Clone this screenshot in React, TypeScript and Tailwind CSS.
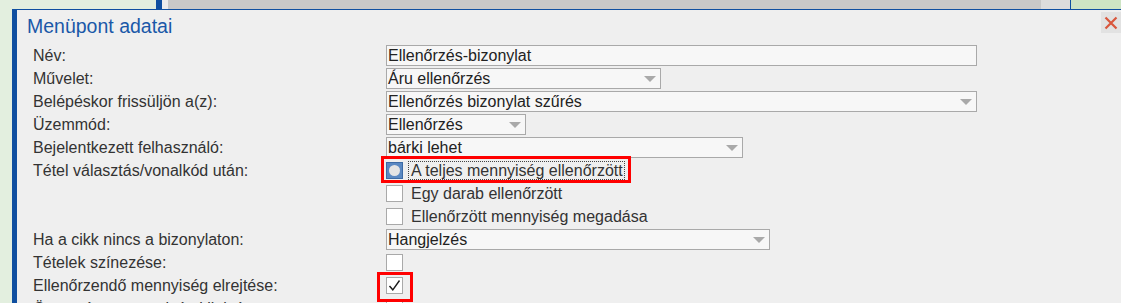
import React from "react";

const Arrow = () => (
  <span className="ml-auto mr-[4px] h-0 w-0 border-l-[6px] border-r-[6px] border-t-[6px] border-l-transparent border-r-transparent border-t-[#a9a9a9]" />
);

const Select = ({ w, text }: { w: string; text: string }) => (
  <div className={`${w} flex h-[21px] items-center border border-[#a9a9a9] bg-[#f7f7f7] pl-[1px] text-[16px] leading-none text-[#222]`}>
    <span>{text}</span>
    <Arrow />
  </div>
);

const Box = ({ checked }: { checked?: boolean }) => (
  <div className="flex h-[17px] w-[17px] items-center justify-center border border-[#a9a9a9] bg-white">
    {checked && (
      <svg width="13" height="13" viewBox="0 0 13 13">
        <path d="M1.5 7 L4.8 10.8 L11.5 1.5" fill="none" stroke="#1a1a1a" strokeWidth="1.4" />
      </svg>
    )}
  </div>
);

const Label = ({ children }: { children: React.ReactNode }) => (
  <div className="flex h-[21px] items-center text-[16px] leading-none text-[#333]">{children}</div>
);

export default function App() {
  return (
    <div
      className="relative h-[303px] w-[1121px] overflow-hidden bg-[#e3efdf]"
      style={{ fontFamily: '"Liberation Sans", Arial, sans-serif' }}
    >
      {/* top strip */}
      <div className="flex h-[9px]">
        <div className="w-[156px] bg-[#e3efdf]" />
        <div className="w-[6px] bg-[#0f4fa0]" />
        <div className="w-[6px] bg-[#ececec]" />
        <div className="w-[873px] bg-[#c8c8c8]" />
        <div className="w-[29px] bg-[#dcdcdc]" />
        <div className="w-[1px] bg-[#0f4fa0]" />
        <div className="flex-1 bg-[#cde4c4]" />
      </div>
      <div className="flex h-[294px]">
        <div className="w-[12px] shrink-0" />
        <div className="flex flex-1 flex-col overflow-hidden border-l-[5px] border-t border-[#0f4fa0] bg-[#efefef]">
          <div className="flex h-[35px] shrink-0 items-start justify-between">
            <div className="pl-[10px] pt-[4px] text-[19.5px] leading-[24px] text-[#1a58a8]">Menüpont adatai</div>
            <div className="mt-[2px] flex h-[21px] w-[20px] items-center justify-center bg-[#e2e2e2]">
              <svg width="14" height="14" viewBox="0 0 14 14">
                <path d="M1.5 1.5 L12.5 12.5 M12.5 1.5 L1.5 12.5" stroke="#d9573d" strokeWidth="2.2" />
              </svg>
            </div>
          </div>
          <div className="grid shrink-0 grid-cols-[353px_1fr] gap-y-[2px] pl-[16px]">
            <Label>Név:</Label>
            <div className="flex h-[21px] w-[591px] items-center border border-[#a9a9a9] bg-[#f7f7f7] pl-[1px] text-[16px] leading-none text-[#222]">
              Ellenőrzés-bizonylat
            </div>

            <Label>Művelet:</Label>
            <Select w="w-[275px]" text="Áru ellenőrzés" />

            <Label>Belépéskor frissüljön a(z):</Label>
            <Select w="w-[591px]" text="Ellenőrzés bizonylat szűrés" />

            <Label>Üzemmód:</Label>
            <Select w="w-[140px]" text="Ellenőrzés" />

            <Label>Bejelentkezett felhasználó:</Label>
            <Select w="w-[357px]" text="bárki lehet" />

            <Label>Tétel választás/vonalkód után:</Label>
            <div className="relative flex h-[21px] items-center">
              <div className="pointer-events-none absolute left-[-5px] top-[-4px] h-[27px] w-[250px] border-[3px] border-[#ff0000]" />
              <div className="flex h-[17px] w-[17px] items-center justify-center border border-[#3c6aa5] bg-[#5a88c2]">
                <div className="h-[11px] w-[11px] rounded-full bg-[#e4e4e4]" />
              </div>
              <div className="ml-[5px] flex h-[19px] items-center border border-dotted border-[#444] pl-[2px] pr-[1px] text-[16px] leading-none text-[#333]">
                A teljes mennyiség ellenőrzött
              </div>
            </div>

            <div />
            <div className="flex h-[21px] items-center">
              <Box />
              <span className="ml-[8px] text-[16px] leading-none text-[#333]">Egy darab ellenőrzött</span>
            </div>

            <div />
            <div className="flex h-[21px] items-center">
              <Box />
              <span className="ml-[8px] text-[16px] leading-none text-[#333]">Ellenőrzött mennyiség megadása</span>
            </div>

            <Label>Ha a cikk nincs a bizonylaton:</Label>
            <Select w="w-[384px]" text="Hangjelzés" />

            <Label>Tételek színezése:</Label>
            <div className="flex h-[21px] items-center">
              <Box />
            </div>

            <Label>Ellenőrzendő mennyiség elrejtése:</Label>
            <div className="relative flex h-[21px] items-center">
              <div className="pointer-events-none absolute left-[-9px] top-[-3px] h-[30px] w-[36px] border-[3px] border-[#ff0000]" />
              <Box checked />
            </div>

            <Label>Összesített mennyiség kijelzése:</Label>
            <div className="flex h-[21px] items-center">
              <Box />
            </div>
          </div>
        </div>
      </div>
    </div>
  );
}
